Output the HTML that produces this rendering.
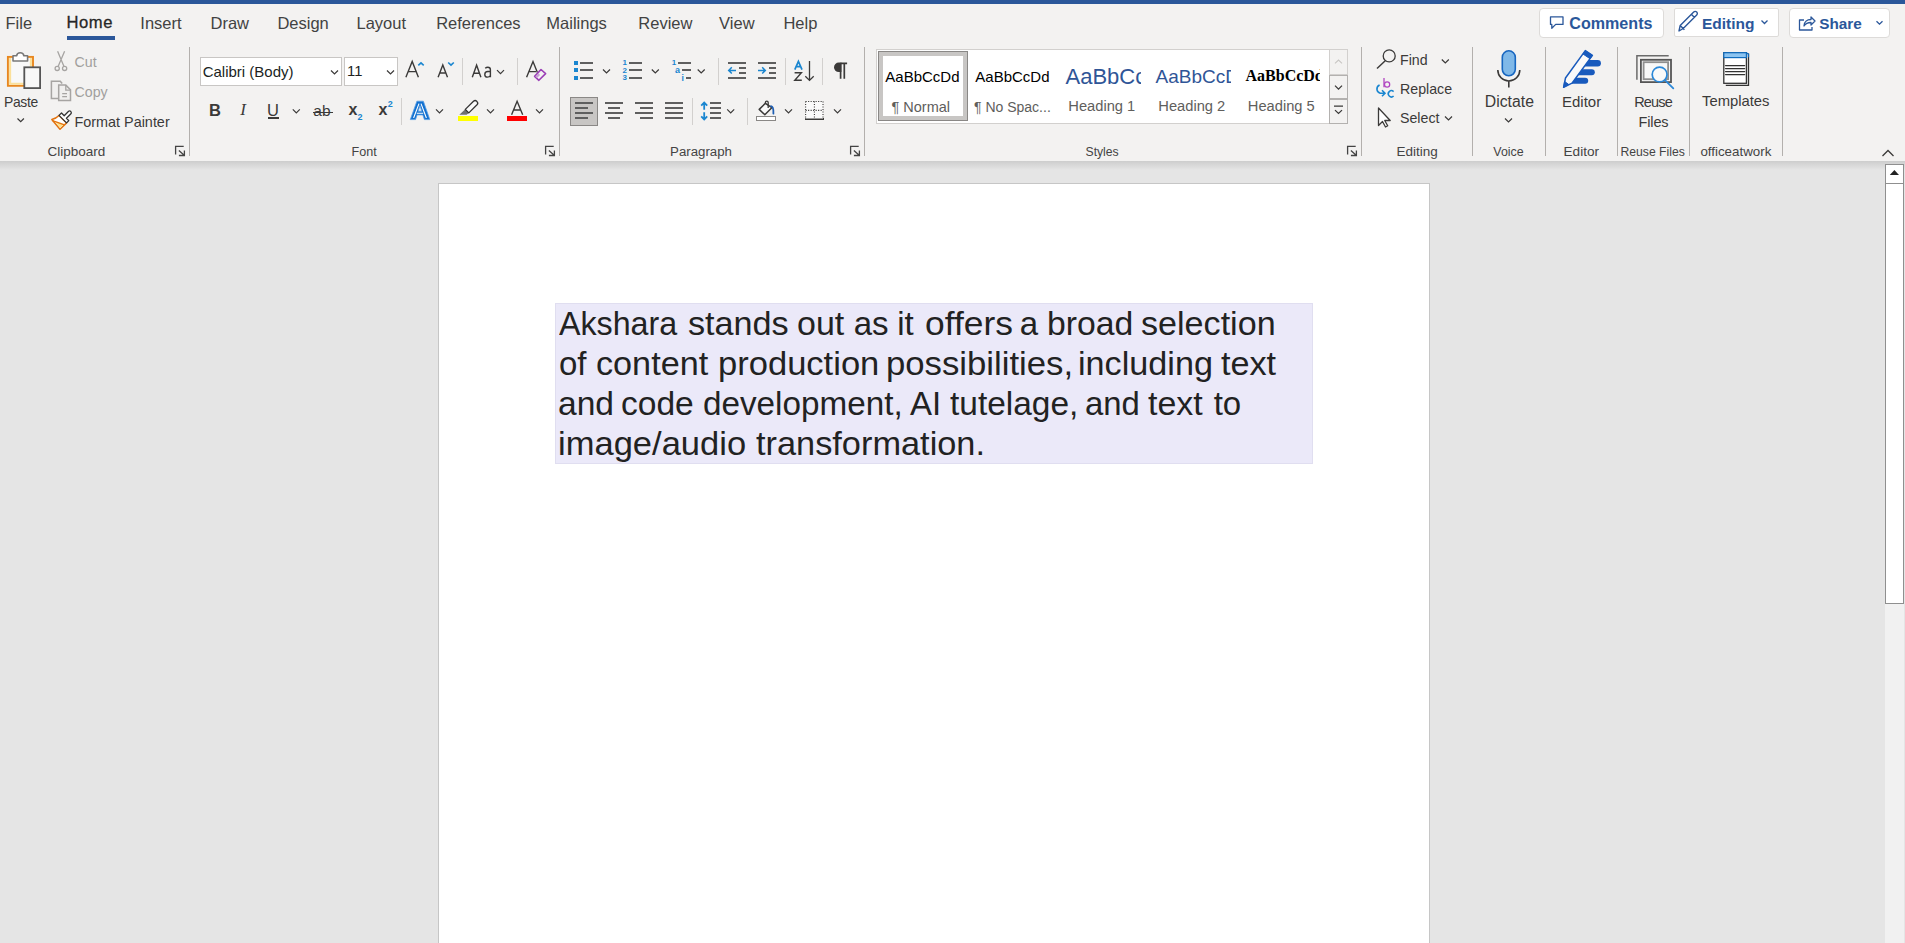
<!DOCTYPE html>
<html><head><meta charset="utf-8"><title>Word</title>
<style>
html,body{margin:0;padding:0;width:1905px;height:943px;overflow:hidden;background:#e5e5e5;font-family:'Liberation Sans', sans-serif}
.t{position:absolute;white-space:nowrap}
svg{position:absolute;left:0;top:0}
</style></head><body>
<div style="position:absolute;left:0px;top:0px;width:1905px;height:4px;background:#2b579a"></div><div style="position:absolute;left:0px;top:4px;width:1905px;height:157px;background:#f3f2f1"></div><div style="position:absolute;left:0px;top:161px;width:1905px;height:782px;background:#e5e5e5"></div><div style="position:absolute;left:0px;top:161px;width:1905px;height:9px;background:linear-gradient(#cdcdcd,#e5e5e5)"></div><div class="t" style="left:5.5px;top:15.23px;font-size:16.5px;line-height:16.5px;color:#424242;font-weight:400;letter-spacing:0px;font-family:'Liberation Sans', sans-serif;">File</div><div class="t" style="left:66.5px;top:15.15px;font-size:16.6px;line-height:16.6px;color:#262626;font-weight:400;letter-spacing:0.55px;font-family:'Liberation Sans', sans-serif;-webkit-text-stroke:0.3px #262626">Home</div><div class="t" style="left:140.3px;top:15.23px;font-size:16.5px;line-height:16.5px;color:#424242;font-weight:400;letter-spacing:0px;font-family:'Liberation Sans', sans-serif;">Insert</div><div class="t" style="left:210.5px;top:15.23px;font-size:16.5px;line-height:16.5px;color:#424242;font-weight:400;letter-spacing:0px;font-family:'Liberation Sans', sans-serif;">Draw</div><div class="t" style="left:277.4px;top:15.23px;font-size:16.5px;line-height:16.5px;color:#424242;font-weight:400;letter-spacing:0px;font-family:'Liberation Sans', sans-serif;">Design</div><div class="t" style="left:356.5px;top:15.23px;font-size:16.5px;line-height:16.5px;color:#424242;font-weight:400;letter-spacing:0px;font-family:'Liberation Sans', sans-serif;">Layout</div><div class="t" style="left:436.2px;top:15.23px;font-size:16.5px;line-height:16.5px;color:#424242;font-weight:400;letter-spacing:0px;font-family:'Liberation Sans', sans-serif;">References</div><div class="t" style="left:546.3px;top:15.23px;font-size:16.5px;line-height:16.5px;color:#424242;font-weight:400;letter-spacing:0px;font-family:'Liberation Sans', sans-serif;">Mailings</div><div class="t" style="left:638.3px;top:15.23px;font-size:16.5px;line-height:16.5px;color:#424242;font-weight:400;letter-spacing:0px;font-family:'Liberation Sans', sans-serif;">Review</div><div class="t" style="left:719.1px;top:15.23px;font-size:16.5px;line-height:16.5px;color:#424242;font-weight:400;letter-spacing:0px;font-family:'Liberation Sans', sans-serif;">View</div><div class="t" style="left:783.4px;top:15.23px;font-size:16.5px;line-height:16.5px;color:#424242;font-weight:400;letter-spacing:0px;font-family:'Liberation Sans', sans-serif;">Help</div><div style="position:absolute;left:67px;top:36px;width:48px;height:4px;background:#2b579a"></div><div style="position:absolute;left:1539px;top:8px;width:125px;height:30px;background:#fff;border:1px solid #dddbd9;border-radius:4px;box-sizing:border-box"></div><div style="position:absolute;left:1674px;top:8px;width:105px;height:29px;background:#fff;border:1px solid #dddbd9;border-radius:2px;box-sizing:border-box"></div><div style="position:absolute;left:1789px;top:8px;width:101px;height:30px;background:#fff;border:1px solid #dddbd9;border-radius:4px;box-sizing:border-box"></div><div class="t" style="left:1569.3px;top:15.47px;font-size:16.1px;line-height:16.1px;color:#2b579a;font-weight:700;letter-spacing:0px;font-family:'Liberation Sans', sans-serif;">Comments</div><div class="t" style="left:1702px;top:16.08px;font-size:15.5px;line-height:15.5px;color:#2b579a;font-weight:700;letter-spacing:0px;font-family:'Liberation Sans', sans-serif;">Editing</div><div class="t" style="left:1819.3px;top:16.15px;font-size:15.3px;line-height:15.3px;color:#2b579a;font-weight:700;letter-spacing:0px;font-family:'Liberation Sans', sans-serif;">Share</div><div style="position:absolute;left:189px;top:47px;width:1px;height:109px;background:#b3b0ad"></div><div style="position:absolute;left:559px;top:47px;width:1px;height:109px;background:#b3b0ad"></div><div style="position:absolute;left:864px;top:47px;width:1px;height:109px;background:#b3b0ad"></div><div style="position:absolute;left:1361px;top:47px;width:1px;height:109px;background:#b3b0ad"></div><div style="position:absolute;left:1472px;top:47px;width:1px;height:109px;background:#b3b0ad"></div><div style="position:absolute;left:1545px;top:47px;width:1px;height:109px;background:#b3b0ad"></div><div style="position:absolute;left:1617px;top:47px;width:1px;height:109px;background:#b3b0ad"></div><div style="position:absolute;left:1689px;top:47px;width:1px;height:109px;background:#b3b0ad"></div><div style="position:absolute;left:1782px;top:47px;width:1px;height:109px;background:#b3b0ad"></div><div class="t" style="left:47.5px;top:144.77px;font-size:13.5px;line-height:13.5px;color:#444;font-weight:400;letter-spacing:0px;font-family:'Liberation Sans', sans-serif;">Clipboard</div><div class="t" style="left:351.5px;top:145.53px;font-size:12.6px;line-height:12.6px;color:#444;font-weight:400;letter-spacing:0px;font-family:'Liberation Sans', sans-serif;">Font</div><div class="t" style="left:670.1px;top:144.98px;font-size:13.25px;line-height:13.25px;color:#444;font-weight:400;letter-spacing:0px;font-family:'Liberation Sans', sans-serif;">Paragraph</div><div class="t" style="left:1085.5px;top:145.87px;font-size:12.2px;line-height:12.2px;color:#444;font-weight:400;letter-spacing:0px;font-family:'Liberation Sans', sans-serif;">Styles</div><div class="t" style="left:1396.5px;top:144.77px;font-size:13.5px;line-height:13.5px;color:#444;font-weight:400;letter-spacing:0px;font-family:'Liberation Sans', sans-serif;">Editing</div><div class="t" style="left:1493.3px;top:145.70px;font-size:12.4px;line-height:12.4px;color:#444;font-weight:400;letter-spacing:0px;font-family:'Liberation Sans', sans-serif;">Voice</div><div class="t" style="left:1563.5px;top:144.69px;font-size:13.6px;line-height:13.6px;color:#444;font-weight:400;letter-spacing:0px;font-family:'Liberation Sans', sans-serif;">Editor</div><div class="t" style="left:1620.5px;top:145.87px;font-size:12.2px;line-height:12.2px;color:#444;font-weight:400;letter-spacing:0px;font-family:'Liberation Sans', sans-serif;">Reuse Files</div><div class="t" style="left:1700.4px;top:144.90px;font-size:13.35px;line-height:13.35px;color:#444;font-weight:400;letter-spacing:0px;font-family:'Liberation Sans', sans-serif;">officeatwork</div><div class="t" style="left:4px;top:95.53px;font-size:13.9px;line-height:13.9px;color:#3b3a39;font-weight:400;letter-spacing:-0.35px;font-family:'Liberation Sans', sans-serif;">Paste</div><div class="t" style="left:74.5px;top:54.98px;font-size:14.2px;line-height:14.2px;color:#a19f9d;font-weight:400;letter-spacing:0px;font-family:'Liberation Sans', sans-serif;">Cut</div><div class="t" style="left:74.5px;top:84.98px;font-size:14.2px;line-height:14.2px;color:#a19f9d;font-weight:400;letter-spacing:0px;font-family:'Liberation Sans', sans-serif;">Copy</div><div class="t" style="left:74.5px;top:114.61px;font-size:14.4px;line-height:14.4px;color:#3b3a39;font-weight:400;letter-spacing:0px;font-family:'Liberation Sans', sans-serif;">Format Painter</div><div style="position:absolute;left:200px;top:57px;width:142px;height:29px;background:#fff;border:1px solid #c8c6c4;box-sizing:border-box"></div><div style="position:absolute;left:344px;top:57px;width:54px;height:29px;background:#fff;border:1px solid #c8c6c4;box-sizing:border-box"></div><div class="t" style="left:202.7px;top:63.90px;font-size:15px;line-height:15px;color:#201f1e;font-weight:400;letter-spacing:0px;font-family:'Liberation Sans', sans-serif;">Calibri (Body)</div><div class="t" style="left:347px;top:64.47px;font-size:14.8px;line-height:14.8px;color:#201f1e;font-weight:400;letter-spacing:0px;font-family:'Liberation Sans', sans-serif;">11</div><div style="position:absolute;left:462px;top:58px;width:1px;height:27px;background:#d2d0ce"></div><div style="position:absolute;left:517px;top:58px;width:1px;height:27px;background:#d2d0ce"></div><div style="position:absolute;left:401px;top:98px;width:1px;height:27px;background:#d2d0ce"></div><div class="t" style="left:209px;top:101.63px;font-size:16.5px;line-height:16.5px;color:#3b3a39;font-weight:700;letter-spacing:0px;font-family:'Liberation Sans', sans-serif;">B</div><div class="t" style="left:240.3px;top:101.21px;font-size:17px;line-height:17px;color:#3b3a39;font-weight:400;letter-spacing:0px;font-family:'Liberation Serif', serif;font-style:italic">I</div><div class="t" style="left:267px;top:101.63px;font-size:16.5px;line-height:16.5px;color:#3b3a39;font-weight:400;letter-spacing:0px;font-family:'Liberation Sans', sans-serif;">U</div><div style="position:absolute;left:268px;top:117px;width:11px;height:1.6px;background:#3b3a39"></div><div class="t" style="left:313.3px;top:103.18px;font-size:15.5px;line-height:15.5px;color:#3b3a39;font-weight:400;letter-spacing:0px;font-family:'Liberation Sans', sans-serif;">ab</div><div style="position:absolute;left:313px;top:111.6px;width:20px;height:1.3px;background:#3b3a39"></div><div class="t" style="left:348.5px;top:102.06px;font-size:16px;line-height:16px;color:#3b3a39;font-weight:700;letter-spacing:0px;font-family:'Liberation Sans', sans-serif;">x</div><div class="t" style="left:357.5px;top:113.38px;font-size:9px;line-height:9px;color:#1a86d0;font-weight:700;letter-spacing:0px;font-family:'Liberation Sans', sans-serif;">2</div><div class="t" style="left:378.5px;top:102.06px;font-size:16px;line-height:16px;color:#3b3a39;font-weight:700;letter-spacing:0px;font-family:'Liberation Sans', sans-serif;">x</div><div class="t" style="left:387.8px;top:100.18px;font-size:9px;line-height:9px;color:#1a86d0;font-weight:700;letter-spacing:0px;font-family:'Liberation Sans', sans-serif;">2</div><div style="position:absolute;left:458px;top:116px;width:20px;height:5px;background:#ffff00"></div><div style="position:absolute;left:507px;top:116px;width:20px;height:5px;background:#ff0000"></div><div style="position:absolute;left:574px;top:60.8px;width:4px;height:4px;background:#1a86d0"></div><div style="position:absolute;left:580px;top:61.699999999999996px;width:13px;height:2.2px;background:#5f5f5f"></div><div style="position:absolute;left:574px;top:68.4px;width:4px;height:4px;background:#1a86d0"></div><div style="position:absolute;left:580px;top:69.30000000000001px;width:13px;height:2.2px;background:#5f5f5f"></div><div style="position:absolute;left:574px;top:75.9px;width:4px;height:4px;background:#1a86d0"></div><div style="position:absolute;left:580px;top:76.80000000000001px;width:13px;height:2.2px;background:#5f5f5f"></div><div class="t" style="left:622.6px;top:59.13px;font-size:8px;line-height:8px;color:#1a86d0;font-weight:700;letter-spacing:0px;font-family:'Liberation Sans', sans-serif;">1</div><div style="position:absolute;left:629px;top:61.699999999999996px;width:13px;height:2.2px;background:#5f5f5f"></div><div class="t" style="left:622.6px;top:66.83px;font-size:8px;line-height:8px;color:#1a86d0;font-weight:700;letter-spacing:0px;font-family:'Liberation Sans', sans-serif;">2</div><div style="position:absolute;left:629px;top:69.30000000000001px;width:13px;height:2.2px;background:#5f5f5f"></div><div class="t" style="left:622.6px;top:74.13px;font-size:8px;line-height:8px;color:#1a86d0;font-weight:700;letter-spacing:0px;font-family:'Liberation Sans', sans-serif;">3</div><div style="position:absolute;left:629px;top:76.80000000000001px;width:13px;height:2.2px;background:#5f5f5f"></div><div class="t" style="left:671.8px;top:59.13px;font-size:8px;line-height:8px;color:#1a86d0;font-weight:700;letter-spacing:0px;font-family:'Liberation Sans', sans-serif;">1</div><div style="position:absolute;left:678px;top:61.7px;width:13px;height:2.2px;background:#5f5f5f"></div><div class="t" style="left:675px;top:66.28px;font-size:9px;line-height:9px;color:#1a86d0;font-weight:700;letter-spacing:0px;font-family:'Liberation Sans', sans-serif;">a</div><div style="position:absolute;left:682px;top:69.3px;width:9px;height:2.2px;background:#5f5f5f"></div><div class="t" style="left:681.6px;top:73.70px;font-size:8.5px;line-height:8.5px;color:#1a86d0;font-weight:700;letter-spacing:0px;font-family:'Liberation Sans', sans-serif;">i</div><div style="position:absolute;left:686px;top:76.8px;width:5px;height:2.2px;background:#5f5f5f"></div><div style="position:absolute;left:718px;top:58px;width:1px;height:27px;background:#d2d0ce"></div><div style="position:absolute;left:728px;top:62px;width:18px;height:2px;background:#5f5f5f"></div><div style="position:absolute;left:738.5px;top:67px;width:7.5px;height:2px;background:#5f5f5f"></div><div style="position:absolute;left:738.5px;top:72px;width:7.5px;height:2px;background:#5f5f5f"></div><div style="position:absolute;left:728px;top:77px;width:18px;height:2px;background:#5f5f5f"></div><div style="position:absolute;left:758px;top:62px;width:18px;height:2px;background:#5f5f5f"></div><div style="position:absolute;left:768.5px;top:67px;width:7.5px;height:2px;background:#5f5f5f"></div><div style="position:absolute;left:768.5px;top:72px;width:7.5px;height:2px;background:#5f5f5f"></div><div style="position:absolute;left:758px;top:77px;width:18px;height:2px;background:#5f5f5f"></div><div style="position:absolute;left:785px;top:58px;width:1px;height:27px;background:#d2d0ce"></div><div style="position:absolute;left:822px;top:58px;width:1px;height:27px;background:#d2d0ce"></div><div style="position:absolute;left:570px;top:97px;width:28px;height:29px;background:#c8c6c4;border:1px solid #8a8886;box-sizing:border-box"></div><div style="position:absolute;left:575px;top:102px;width:18px;height:2px;background:#5f5f5f"></div><div style="position:absolute;left:575px;top:107px;width:13px;height:2px;background:#5f5f5f"></div><div style="position:absolute;left:575px;top:112px;width:18px;height:2px;background:#5f5f5f"></div><div style="position:absolute;left:575px;top:117px;width:13px;height:2px;background:#5f5f5f"></div><div style="position:absolute;left:605px;top:102px;width:18px;height:2px;background:#5f5f5f"></div><div style="position:absolute;left:607.7px;top:107px;width:12.6px;height:2px;background:#5f5f5f"></div><div style="position:absolute;left:605px;top:112px;width:18px;height:2px;background:#5f5f5f"></div><div style="position:absolute;left:607.7px;top:117px;width:12.6px;height:2px;background:#5f5f5f"></div><div style="position:absolute;left:635px;top:102px;width:18px;height:2px;background:#5f5f5f"></div><div style="position:absolute;left:640.2px;top:107px;width:12.8px;height:2px;background:#5f5f5f"></div><div style="position:absolute;left:635px;top:112px;width:18px;height:2px;background:#5f5f5f"></div><div style="position:absolute;left:640.2px;top:117px;width:12.8px;height:2px;background:#5f5f5f"></div><div style="position:absolute;left:665px;top:102px;width:18px;height:2px;background:#5f5f5f"></div><div style="position:absolute;left:665px;top:107px;width:18px;height:2px;background:#5f5f5f"></div><div style="position:absolute;left:665px;top:112px;width:18px;height:2px;background:#5f5f5f"></div><div style="position:absolute;left:665px;top:117px;width:18px;height:2px;background:#5f5f5f"></div><div style="position:absolute;left:692px;top:98px;width:1px;height:27px;background:#d2d0ce"></div><div style="position:absolute;left:710px;top:102px;width:11px;height:2px;background:#5f5f5f"></div><div style="position:absolute;left:710px;top:107px;width:11px;height:2px;background:#5f5f5f"></div><div style="position:absolute;left:710px;top:112px;width:11px;height:2px;background:#5f5f5f"></div><div style="position:absolute;left:710px;top:117px;width:11px;height:2px;background:#5f5f5f"></div><div style="position:absolute;left:747px;top:98px;width:1px;height:27px;background:#d2d0ce"></div><div style="position:absolute;left:756px;top:116px;width:20px;height:5px;background:#fff;border:1.3px solid #8a8886;box-sizing:border-box"></div><div style="position:absolute;left:805px;top:118px;width:19px;height:2px;background:#3b3a39"></div><div style="position:absolute;left:876px;top:49px;width:454px;height:75px;background:#fff;border:1px solid #d2d0ce;border-right:none;box-sizing:border-box"></div><div style="position:absolute;left:878px;top:51px;width:90px;height:70px;background:#fff;border:1px solid #8a8886;box-sizing:border-box;box-shadow:inset 0 0 0 4px #c8c6c4"></div><div class="t" style="left:885.3px;top:68.90px;font-size:15px;line-height:15px;color:#000;font-weight:400;letter-spacing:0px;font-family:'Liberation Sans', sans-serif;">AaBbCcDd</div><div class="t" style="left:891.5px;top:99.73px;font-size:14.5px;line-height:14.5px;color:#605e5c;font-weight:400;letter-spacing:0px;font-family:'Liberation Sans', sans-serif;">&#182; Normal</div><div class="t" style="left:975.3px;top:68.90px;font-size:15px;line-height:15px;color:#000;font-weight:400;letter-spacing:0px;font-family:'Liberation Sans', sans-serif;">AaBbCcDd</div><div class="t" style="left:974px;top:100.15px;font-size:14px;line-height:14px;color:#605e5c;font-weight:400;letter-spacing:0px;font-family:'Liberation Sans', sans-serif;">&#182; No Spac...</div><div style="position:absolute;left:1064px;top:60px;width:77px;height:30px;overflow:hidden"><div class="t" style="left:1.5px;top:5.68px;font-size:22px;line-height:22px;color:#2f5597;font-weight:400;letter-spacing:0px;font-family:'Liberation Sans', sans-serif;">AaBbCc</div></div><div class="t" style="left:1068.3px;top:99.16px;font-size:14.7px;line-height:14.7px;color:#605e5c;font-weight:400;letter-spacing:0px;font-family:'Liberation Sans', sans-serif;">Heading 1</div><div style="position:absolute;left:1154px;top:60px;width:77px;height:30px;overflow:hidden"><div class="t" style="left:1.5px;top:7.02px;font-size:19px;line-height:19px;color:#2f5597;font-weight:400;letter-spacing:0px;font-family:'Liberation Sans', sans-serif;">AaBbCcDd</div></div><div class="t" style="left:1158.3px;top:99.16px;font-size:14.7px;line-height:14.7px;color:#605e5c;font-weight:400;letter-spacing:0px;font-family:'Liberation Sans', sans-serif;">Heading 2</div><div style="position:absolute;left:1244px;top:60px;width:76px;height:30px;overflow:hidden"><div class="t" style="left:1.5px;top:7.96px;font-size:16px;line-height:16px;color:#000;font-weight:700;letter-spacing:0px;font-family:'Liberation Serif', serif;">AaBbCcDd</div></div><div class="t" style="left:1247.8px;top:99.16px;font-size:14.7px;line-height:14.7px;color:#605e5c;font-weight:400;letter-spacing:0px;font-family:'Liberation Sans', sans-serif;">Heading 5</div><div style="position:absolute;left:1329px;top:49px;width:19px;height:26px;background:#f3f2f1;border:1px solid #d2d0ce;box-sizing:border-box"></div><div style="position:absolute;left:1329px;top:75px;width:19px;height:24px;background:#f3f2f1;border:1px solid #b3b1af;border-top-width:1.5px;box-sizing:border-box"></div><div style="position:absolute;left:1329px;top:99px;width:19px;height:25px;background:#f3f2f1;border:1px solid #b3b1af;border-top-width:1.5px;box-sizing:border-box"></div><div class="t" style="left:1400px;top:52.88px;font-size:14.2px;line-height:14.2px;color:#3b3a39;font-weight:400;letter-spacing:0px;font-family:'Liberation Sans', sans-serif;">Find</div><div class="t" style="left:1400px;top:81.68px;font-size:14.2px;line-height:14.2px;color:#3b3a39;font-weight:400;letter-spacing:0px;font-family:'Liberation Sans', sans-serif;">Replace</div><div class="t" style="left:1400px;top:110.78px;font-size:14.2px;line-height:14.2px;color:#3b3a39;font-weight:400;letter-spacing:0px;font-family:'Liberation Sans', sans-serif;">Select</div><div class="t" style="left:1484.8px;top:93.63px;font-size:15.8px;line-height:15.8px;color:#3b3a39;font-weight:400;letter-spacing:0px;font-family:'Liberation Sans', sans-serif;">Dictate</div><div class="t" style="left:1562px;top:94.30px;font-size:15px;line-height:15px;color:#3b3a39;font-weight:400;letter-spacing:0px;font-family:'Liberation Sans', sans-serif;">Editor</div><div class="t" style="left:1634.2px;top:94.73px;font-size:14.5px;line-height:14.5px;color:#3b3a39;font-weight:400;letter-spacing:-0.85px;font-family:'Liberation Sans', sans-serif;">Reuse</div><div class="t" style="left:1638.6px;top:114.73px;font-size:14.5px;line-height:14.5px;color:#3b3a39;font-weight:400;letter-spacing:-0.15px;font-family:'Liberation Sans', sans-serif;">Files</div><div class="t" style="left:1702px;top:94.47px;font-size:14.8px;line-height:14.8px;color:#3b3a39;font-weight:400;letter-spacing:0px;font-family:'Liberation Sans', sans-serif;">Templates</div><div style="position:absolute;left:438px;top:183px;width:992px;height:760px;background:#fff;border:1px solid #c6c6c6;border-bottom:none;box-sizing:border-box"></div><div style="position:absolute;left:555px;top:303px;width:758px;height:161px;background:#ebe9f9;border:1px solid #e0def0;box-sizing:border-box"></div><div class="t" style="left:558.6px;top:307.07px;font-size:33px;line-height:33px;color:#222;font-weight:400;letter-spacing:0px;font-family:'Liberation Sans', sans-serif;transform:scaleX(0.9762);transform-origin:0 0">Akshara</div><div class="t" style="left:687.96px;top:307.07px;font-size:33px;line-height:33px;color:#222;font-weight:400;letter-spacing:0px;font-family:'Liberation Sans', sans-serif;transform:scaleX(1.0358);transform-origin:0 0">stands</div><div class="t" style="left:796.97px;top:307.07px;font-size:33px;line-height:33px;color:#222;font-weight:400;letter-spacing:0px;font-family:'Liberation Sans', sans-serif;transform:scaleX(1.0289);transform-origin:0 0">out</div><div class="t" style="left:853.65px;top:307.07px;font-size:33px;line-height:33px;color:#222;font-weight:400;letter-spacing:0px;font-family:'Liberation Sans', sans-serif;">as</div><div class="t" style="left:897.25px;top:307.07px;font-size:33px;line-height:33px;color:#222;font-weight:400;letter-spacing:0px;font-family:'Liberation Sans', sans-serif;">it</div><div class="t" style="left:924.53px;top:307.07px;font-size:33px;line-height:33px;color:#222;font-weight:400;letter-spacing:0px;font-family:'Liberation Sans', sans-serif;transform:scaleX(1.0725);transform-origin:0 0">offers</div><div class="t" style="left:1019.7px;top:307.07px;font-size:33px;line-height:33px;color:#222;font-weight:400;letter-spacing:0px;font-family:'Liberation Sans', sans-serif;">a</div><div class="t" style="left:1046.66px;top:307.07px;font-size:33px;line-height:33px;color:#222;font-weight:400;letter-spacing:0px;font-family:'Liberation Sans', sans-serif;transform:scaleX(1.0222);transform-origin:0 0">broad</div><div class="t" style="left:1141.37px;top:307.07px;font-size:33px;line-height:33px;color:#222;font-weight:400;letter-spacing:0px;font-family:'Liberation Sans', sans-serif;transform:scaleX(1.0336);transform-origin:0 0">selection</div><div class="t" style="left:558.95px;top:347.07px;font-size:33px;line-height:33px;color:#222;font-weight:400;letter-spacing:0px;font-family:'Liberation Sans', sans-serif;">of</div><div class="t" style="left:596.26px;top:347.07px;font-size:33px;line-height:33px;color:#222;font-weight:400;letter-spacing:0px;font-family:'Liberation Sans', sans-serif;transform:scaleX(1.0364);transform-origin:0 0">content</div><div class="t" style="left:717.51px;top:347.07px;font-size:33px;line-height:33px;color:#222;font-weight:400;letter-spacing:0px;font-family:'Liberation Sans', sans-serif;transform:scaleX(1.0467);transform-origin:0 0">production</div><div class="t" style="left:885.6px;top:347.07px;font-size:33px;line-height:33px;color:#222;font-weight:400;letter-spacing:0px;font-family:'Liberation Sans', sans-serif;transform:scaleX(1.0514);transform-origin:0 0">possibilities,</div><div class="t" style="left:1077.53px;top:347.07px;font-size:33px;line-height:33px;color:#222;font-weight:400;letter-spacing:0px;font-family:'Liberation Sans', sans-serif;transform:scaleX(1.0362);transform-origin:0 0">including</div><div class="t" style="left:1221.2px;top:347.07px;font-size:33px;line-height:33px;color:#222;font-weight:400;letter-spacing:0px;font-family:'Liberation Sans', sans-serif;transform:scaleX(1.0358);transform-origin:0 0">text</div><div class="t" style="left:557.98px;top:387.07px;font-size:33px;line-height:33px;color:#222;font-weight:400;letter-spacing:0px;font-family:'Liberation Sans', sans-serif;transform:scaleX(1.0173);transform-origin:0 0">and</div><div class="t" style="left:621.38px;top:387.07px;font-size:33px;line-height:33px;color:#222;font-weight:400;letter-spacing:0px;font-family:'Liberation Sans', sans-serif;transform:scaleX(1.0171);transform-origin:0 0">code</div><div class="t" style="left:702.59px;top:387.07px;font-size:33px;line-height:33px;color:#222;font-weight:400;letter-spacing:0px;font-family:'Liberation Sans', sans-serif;transform:scaleX(1.0077);transform-origin:0 0">development,</div><div class="t" style="left:910.05px;top:387.07px;font-size:33px;line-height:33px;color:#222;font-weight:400;letter-spacing:0px;font-family:'Liberation Sans', sans-serif;">AI</div><div class="t" style="left:949.9px;top:387.07px;font-size:33px;line-height:33px;color:#222;font-weight:400;letter-spacing:0px;font-family:'Liberation Sans', sans-serif;transform:scaleX(1.0137);transform-origin:0 0">tutelage,</div><div class="t" style="left:1084.6px;top:387.07px;font-size:33px;line-height:33px;color:#222;font-weight:400;letter-spacing:0px;font-family:'Liberation Sans', sans-serif;transform:scaleX(0.9962);transform-origin:0 0">and</div><div class="t" style="left:1148.4px;top:387.07px;font-size:33px;line-height:33px;color:#222;font-weight:400;letter-spacing:0px;font-family:'Liberation Sans', sans-serif;transform:scaleX(1.0283);transform-origin:0 0">text</div><div class="t" style="left:1213.7px;top:387.07px;font-size:33px;line-height:33px;color:#222;font-weight:400;letter-spacing:0px;font-family:'Liberation Sans', sans-serif;">to</div><div class="t" style="left:557.51px;top:427.07px;font-size:33px;line-height:33px;color:#222;font-weight:400;letter-spacing:0px;font-family:'Liberation Sans', sans-serif;transform:scaleX(1.0463);transform-origin:0 0">image/audio</div><div class="t" style="left:755.5px;top:427.07px;font-size:33px;line-height:33px;color:#222;font-weight:400;letter-spacing:0px;font-family:'Liberation Sans', sans-serif;transform:scaleX(1.0404);transform-origin:0 0">transformation.</div><div style="position:absolute;left:1885px;top:164px;width:19px;height:779px;background:#f1f1f1"></div><div style="position:absolute;left:1885px;top:164px;width:19px;height:20px;background:#fff;border:1px solid #8f8f8f;box-sizing:border-box"></div><div style="position:absolute;left:1885px;top:183px;width:19px;height:421px;background:#fff;border:1px solid #8f8f8f;box-sizing:border-box"></div>
<svg width="1905" height="943" viewBox="0 0 1905 943"><path d="M1550.5 16.9h12.5v7.5h-7.3l-3.9 3.9v-3.9h-1.3z" fill="none" stroke="#2b579a" stroke-width="1.3" stroke-linejoin="round"/><path d="M1679 31l1.2-5.5 13.5-13.5a2 2 0 0 1 3 3l-13.5 13.5z M1691.5 14.5l2.8 2.8 M1680.2 25.5l4.2 4.2" fill="none" stroke="#2b579a" stroke-width="1.4" stroke-linejoin="round"/><path d="M1761.5 20.5l3 3 3-3" fill="none" stroke="#2b579a" stroke-width="1.3"/><path d="M1804 20h-4.5v10h12.5v-3 M1804 26c0-4 3-6.5 7-6.5v-2.5l4 4-4 4v-2.5c-3 0-5.5 1-7 3.5z" fill="none" stroke="#2b579a" stroke-width="1.3" stroke-linejoin="round"/><path d="M1876.5 21.2l3 3 3-3" fill="none" stroke="#2b579a" stroke-width="1.3"/><path d="M175.6 154.6V146.4H183.7 M178.9 150.4L184.2 155.3 M184.4 150.4V155.5H178.9" fill="none" stroke="#444" stroke-width="1.3"/><path d="M545.6 154.6V146.4H553.7 M548.9 150.4L554.2 155.3 M554.4 150.4V155.5H548.9" fill="none" stroke="#444" stroke-width="1.3"/><path d="M850.6 154.6V146.4H858.7 M853.9 150.4L859.2 155.3 M859.4 150.4V155.5H853.9" fill="none" stroke="#444" stroke-width="1.3"/><path d="M1347.6 154.6V146.4H1355.7 M1350.9 150.4L1356.2 155.3 M1356.4 150.4V155.5H1350.9" fill="none" stroke="#444" stroke-width="1.3"/><rect x="7.9" y="56.9" width="25.1" height="28.9" fill="#f8f8f8" stroke="#e8871e" stroke-width="1.9"/><path d="M10.1 58V83.8H24 M30.9 58V66.5" fill="none" stroke="#fbe09a" stroke-width="2.1"/><path d="M13 55.8h3.6a3.7 3.7 0 0 1 7.3 0h3.7v5.2h-14.6z" fill="#fff" stroke="#787878" stroke-width="1.6" stroke-linejoin="round"/><rect x="24.3" y="67.3" width="15.8" height="20.8" fill="#f8f8f8" stroke="#555" stroke-width="1.8"/><path d="M17.5 118.5l3.2 3.2 3.2-3.2" fill="none" stroke="#3b3a39" stroke-width="1.2"/><path d="M57.6 51.3L64 66.4 M64.6 51.3L58.1 66.4" fill="none" stroke="#a6a4a2" stroke-width="1.3"/><circle cx="57.2" cy="68.4" r="2.1" fill="none" stroke="#a6a4a2" stroke-width="1.3"/><circle cx="64.6" cy="68.4" r="2.1" fill="none" stroke="#a6a4a2" stroke-width="1.3"/><path d="M58.7 98.4h-7.3v-17.1h8.9l1.9 2.2" fill="#f0efee" stroke="#a6a4a2" stroke-width="1.5"/><path d="M58.7 85.1h7.1l4.7 4.6v10.8h-11.8z" fill="#f0efee" stroke="#a6a4a2" stroke-width="1.5"/><path d="M65.8 85.1v5h4.7 M62.2 93.7h4.8 M62.2 96.6h4.8" fill="none" stroke="#a6a4a2" stroke-width="1.3"/><path d="M51.8 119.5Q56 118.6 59 115.5L66.6 122.9 60 129.3z" fill="#fff" stroke="#e3730f" stroke-width="1.5" stroke-linejoin="round"/><path d="M54.5 121.3L63.8 124.5 60 127.8z" fill="#fde28d"/><path d="M52.5 120.6L64.5 124.8" stroke="#e3730f" stroke-width="1.3"/><path d="M59 115.4L61.5 113 64.2 115.7 68.6 111.3Q69.6 110.4 70.6 111.3L71 111.8Q71.8 112.8 70.9 113.7L66.4 118.2 68.8 120.6 66.6 122.9z" fill="#fff" stroke="#333" stroke-width="1.3" stroke-linejoin="round"/><path d="M331 70.5l3.5 3.5 3.5 -3.5" fill="none" stroke="#3b3a39" stroke-width="1.2"/><path d="M387 70.5l3.5 3.5 3.5 -3.5" fill="none" stroke="#3b3a39" stroke-width="1.2"/><path d="M405.9 77.2L412.2 61.5 418.4 77.2 M408.2 71.6h8" fill="none" stroke="#3b3a39" stroke-width="1.4"/><path d="M418.3 65.4l2.7-2.6 2.7 2.6" fill="none" stroke="#1a86d0" stroke-width="1.6"/><path d="M438.1 77.2L442.8 65 447.5 77.2 M439.9 73h5.8" fill="none" stroke="#3b3a39" stroke-width="1.4"/><path d="M448.2 62.5l2.8 2.7 2.8-2.7" fill="none" stroke="#1a86d0" stroke-width="1.6"/><path d="M472.3 77.2L476.6 65.2 480.9 77.2 M473.9 73.2h5.4" fill="none" stroke="#3b3a39" stroke-width="1.4"/><path d="M485.2 68.2q1.2-1 2.6-1 2.6 0 2.6 2.6v7.4 M490.4 71.5h-2.6q-3 0-3 2.9 0 2.7 2.6 2.7 2 0 3-1.6" fill="none" stroke="#3b3a39" stroke-width="1.4"/><path d="M497 70.2l3.5 3.5 3.5 -3.5" fill="none" stroke="#3b3a39" stroke-width="1.2"/><path d="M526.6 77.2L533 61.5 537.4 72.5 M529 71.6h7" fill="none" stroke="#3b3a39" stroke-width="1.4"/><path d="M534.6 76.4L541 69.5 545.6 73.6 538.9 80.3z" fill="#f3f2f1" stroke="#9b3fb6" stroke-width="1.6" stroke-linejoin="round"/><path d="M535.2 76.4l3.1-3.1 1.8 1.7-3.1 3.1z" fill="#c9a0d6"/><path d="M292.8 109.3l3.5 3.5 3.5 -3.5" fill="none" stroke="#3b3a39" stroke-width="1.2"/><path d="M410.3 119.6L416.9 101.2H423.4L429.8 119.6H424.4L422.8 114.9H417.1L415.5 119.6Z M418.1 111.2H421.8L420 105.6Z" fill="#1170cf" fill-rule="evenodd" stroke="#5aa0e6" stroke-width="0.8" stroke-linejoin="round"/><path d="M413.6 118L419 103.6 M421 103.6L426.4 118 M416.8 113.2H423.2" fill="none" stroke="#fff" stroke-width="1.1"/><path d="M436 109.3l3.5 3.5 3.5 -3.5" fill="none" stroke="#3b3a39" stroke-width="1.2"/><path d="M459.3 114.7L465.2 109.3 468.8 112.9 466.6 114.7Z" fill="#707070"/><path d="M465.3 109.4L473.5 101.3A2.3 2.3 0 0 1 476.7 101.3L477 101.6A2.3 2.3 0 0 1 477 104.8L468.8 112.9Z" fill="#fafafa" stroke="#333" stroke-width="1.3" stroke-linejoin="round"/><path d="M487 109.3l3.5 3.5 3.5 -3.5" fill="none" stroke="#3b3a39" stroke-width="1.2"/><path d="M511.6 114.8L517.1 101.3 522.7 114.8 M513.6 110h7" fill="none" stroke="#3b3a39" stroke-width="1.4"/><path d="M536 109.3l3.5 3.5 3.5 -3.5" fill="none" stroke="#3b3a39" stroke-width="1.2"/><path d="M603 69.5l3.5 3.5 3.5 -3.5" fill="none" stroke="#3b3a39" stroke-width="1.2"/><path d="M651.8 69.5l3.5 3.5 3.5 -3.5" fill="none" stroke="#3b3a39" stroke-width="1.2"/><path d="M697.7 69.5l3.5 3.5 3.5 -3.5" fill="none" stroke="#3b3a39" stroke-width="1.2"/><path d="M736 70.4h-7 M731.8 67.3l-3.1 3.1 3.1 3.1" fill="none" stroke="#1a86d0" stroke-width="1.5"/><path d="M758 70.4h7 M762.2 67.3l3.1 3.1-3.1 3.1" fill="none" stroke="#1a86d0" stroke-width="1.5"/><path d="M794.8 69.6L798.4 61.3 802 69.6 M796.1 66.6h4.6" fill="none" stroke="#1a86d0" stroke-width="1.7"/><path d="M794.6 72.8h6.8L794.8 80.3h7" fill="none" stroke="#3b3a39" stroke-width="1.4"/><path d="M809.5 61v19.2 M805.3 76.2l4.2 4.2 4.2-4.2" fill="none" stroke="#3b3a39" stroke-width="1.3"/><path d="M840.5 63.3h6.6 M840.6 63.3v15.4 M844.3 63.3v15.4" fill="none" stroke="#3b3a39" stroke-width="1.7"/><path d="M841.4 62.5h-2.6a4.8 4.8 0 0 0 0 9.6h2.6z" fill="#3b3a39"/><path d="M704.2 102.8v7 M704.2 112.2v7 M701.2 105.6l3-3 3 3 M701.2 116.4l3 3 3-3" fill="none" stroke="#1a86d0" stroke-width="1.8"/><path d="M727.2 109.3l3.5 3.5 3.5 -3.5" fill="none" stroke="#3b3a39" stroke-width="1.2"/><path d="M759.2 109.4L765.4 103.3 771.8 107.7 764.8 114.7z" fill="#fafafa" stroke="#3b3a39" stroke-width="1.5" stroke-linejoin="round"/><path d="M765.4 103.6v-1a1.4 1.4 0 0 1 2.8 0v5.4" fill="none" stroke="#3b3a39" stroke-width="1.3"/><path d="M771 106.2c1.8 0.2 2.6 2.8 2.4 7.4" fill="none" stroke="#1f5fb4" stroke-width="1.8" stroke-linecap="round"/><path d="M785 109.3l3.5 3.5 3.5 -3.5" fill="none" stroke="#3b3a39" stroke-width="1.2"/><rect x="805.5" y="101.5" width="17.5" height="17" fill="#fafafa"/><path d="M805.6 101.5h17.6 M823 101.5v17 M805.6 101.5v17 M805.6 110.4h17.6 M814.4 101.5v17" fill="none" stroke="#3b3a39" stroke-width="1.1" stroke-dasharray="1.1 1.4"/><path d="M834 109.3l3.5 3.5 3.5 -3.5" fill="none" stroke="#3b3a39" stroke-width="1.2"/><path d="M1335 63.3l3.5-3.3 3.5 3.3" fill="none" stroke="#c8c6c4" stroke-width="1.1"/><path d="M1335 85.6l3.5 3.5 3.5-3.5" fill="none" stroke="#3b3a39" stroke-width="1.3"/><path d="M1334 106.2h9 M1335 110.1l3.5 3.3 3.5-3.3" fill="none" stroke="#3b3a39" stroke-width="1.3"/><circle cx="1389.2" cy="55.9" r="6" fill="none" stroke="#3b3a39" stroke-width="1.3"/><path d="M1385.5 60.5l-8.5 8" stroke="#3b3a39" stroke-width="1.4"/><path d="M1441.8 59.5l3.5 3.5 3.5 -3.5" fill="none" stroke="#3b3a39" stroke-width="1.2"/><path d="M1384 78v9.3" stroke="#b146c2" stroke-width="1.3"/><circle cx="1387.1" cy="84.5" r="2.6" fill="none" stroke="#b146c2" stroke-width="1.25"/><path d="M1393.6 91.6a3.1 3.1 0 1 0 0 4.4" fill="none" stroke="#1a86d0" stroke-width="1.5"/><path d="M1379.6 84.9a4.4 4.4 0 0 0 0.6 8.3h4.9 M1382 90.2l3 3-3 3" fill="none" stroke="#1a86d0" stroke-width="1.6"/><path d="M1378.5 108v17.5l4-4 3 5.5 2.2-1.2-3-5.3h5.5z" fill="#fff" stroke="#3b3a39" stroke-width="1.3" stroke-linejoin="round"/><path d="M1445 116.5l3.5 3.5 3.5 -3.5" fill="none" stroke="#3b3a39" stroke-width="1.2"/><rect x="1502.3" y="50.8" width="13" height="25" rx="6.5" fill="#7fb8e8" stroke="#1766c0" stroke-width="1.6"/><path d="M1497.8 70a11 11 0 0 0 22 0 M1508.8 81v6.5" fill="none" stroke="#3b3a39" stroke-width="1.6"/><path d="M1505 118.5l3.5 3.5 3.5 -3.5" fill="none" stroke="#3b3a39" stroke-width="1.2"/><rect x="1580" y="60.1" width="20.9" height="6.4" rx="3.2" fill="#185abd"/><rect x="1574" y="69.2" width="20.8" height="6.1" rx="3.05" fill="#185abd"/><rect x="1568" y="77.7" width="20.2" height="6.1" rx="3.05" fill="#185abd"/><path d="M1563.6 87.3L1565.5 78 1585.3 50.6 1592.4 55.4 1572 83.2z" fill="#fafafa" stroke="#185abd" stroke-width="1.5" stroke-linejoin="round"/><path d="M1585.3 50.6L1592.4 55.4 1590 58.7 1583 54z M1563.6 87.3L1564.6 81.5 1568.8 84.5z" fill="#185abd" stroke="#185abd" stroke-width="1" stroke-linejoin="round"/><path d="M1636.9 79.8V55.8H1668.7" fill="none" stroke="#6b6b6b" stroke-width="1.5"/><rect x="1640.9" y="59.8" width="30.1" height="22.3" fill="#f8f8f8" stroke="#555" stroke-width="1.8"/><rect x="1643.6" y="62.2" width="24.5" height="17" fill="#f8f8f8" stroke="#8f8f8f" stroke-width="1.8"/><circle cx="1659.6" cy="74.5" r="7.4" fill="#fafafa" stroke="#2b88d8" stroke-width="1.7"/><path d="M1665 80.1l8.3 8.2" stroke="#2b88d8" stroke-width="1.8" stroke-linecap="round"/><path d="M1725.8 85.4H1748.5V53.5" fill="none" stroke="#333" stroke-width="1.3"/><rect x="1723.8" y="52.7" width="22.6" height="30.6" fill="#fff" stroke="#333" stroke-width="1.3"/><rect x="1723.8" y="52.7" width="22.6" height="4.9" fill="#8cc4f0" stroke="#0f6cbd" stroke-width="1.2"/><path d="M1746.6 53l1.9 1.2v3" fill="none" stroke="#0f6cbd" stroke-width="1.2"/><path d="M1725.6 65.6h19" stroke="#333" stroke-width="1.4" stroke-linecap="round"/><path d="M1725.6 68.6h19" stroke="#333" stroke-width="1.4" stroke-linecap="round"/><path d="M1725.6 71.6h19" stroke="#333" stroke-width="1.4" stroke-linecap="round"/><path d="M1725.6 74.6h19" stroke="#333" stroke-width="1.4" stroke-linecap="round"/><path d="M1882.5 156l5.5-5.5 5.5 5.5" fill="none" stroke="#3b3a39" stroke-width="1.3"/><path d="M1889.8 175h9.2l-4.6-5z" fill="#222"/></svg>
</body></html>
